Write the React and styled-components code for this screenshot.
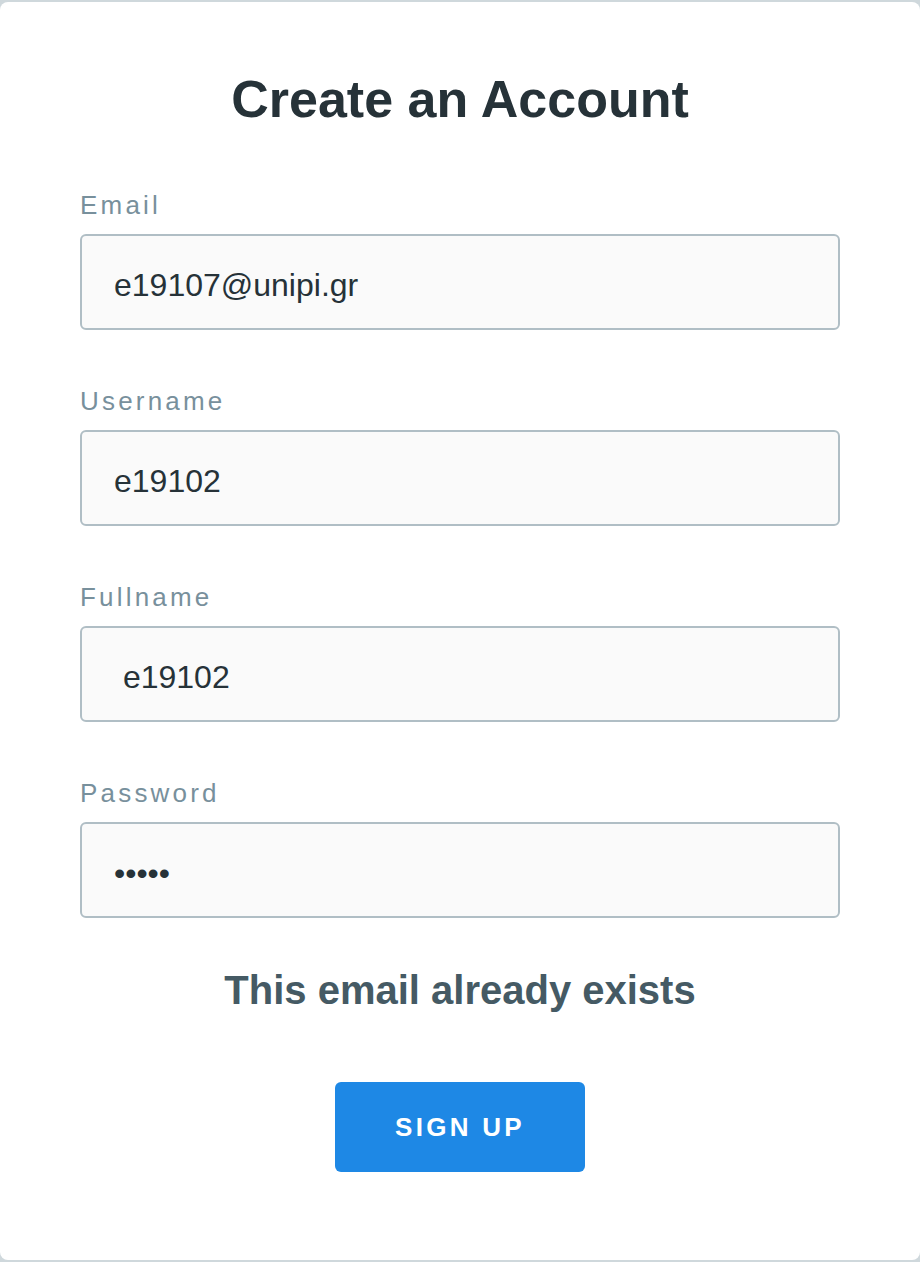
import React from 'react';
import styled, { createGlobalStyle } from 'styled-components';

const GlobalStyle = createGlobalStyle`
  html, body {
    margin: 0;
    padding: 0;
    background: #cfd8dc;
    font-family: "Liberation Sans", Arial, sans-serif;
  }
  * { box-sizing: border-box; }
`;

const Card = styled.div`
  margin: 2px 0;
  min-height: 1258px;
  background: #ffffff;
  border-radius: 8px;
  padding: 67px 80px 0;
  display: flex;
  flex-direction: column;
  align-items: center;
`;

const Title = styled.h1`
  margin: 0 0 61px;
  font-size: 52px;
  line-height: 60px;
  font-weight: bold;
  color: #263238;
  text-align: center;
`;

const Form = styled.form`
  width: 100%;
  display: flex;
  flex-direction: column;
`;

const Fields = styled.div`
  display: flex;
  flex-direction: column;
  gap: 56px;
`;

const Field = styled.div`
  display: flex;
  flex-direction: column;
  gap: 14px;
`;

const Label = styled.label`
  font-size: 26px;
  line-height: 30px;
  letter-spacing: 3.2px;
  color: #78909c;
`;

const Input = styled.input`
  width: 100%;
  height: 96px;
  padding: 6px 32px 0;
  border: 2px solid #b0bec5;
  border-radius: 6px;
  background: #fafafa;
  font-family: "Liberation Sans", Arial, sans-serif;
  font-size: 32px;
  color: #263238;
  outline: none;
`;

const ErrorText = styled.p`
  margin: 49px 0 0;
  font-size: 40px;
  line-height: 46px;
  font-weight: bold;
  color: #455a64;
  text-align: center;
`;

const Button = styled.button`
  align-self: center;
  margin-top: 69px;
  width: 250px;
  height: 90px;
  border: none;
  border-radius: 6px;
  background: #1e88e5;
  color: #ffffff;
  font-family: "Liberation Sans", Arial, sans-serif;
  font-size: 26px;
  font-weight: bold;
  letter-spacing: 3.3px;
  cursor: pointer;
`;

const fields = [
  { label: 'Email', type: 'text', value: 'e19107@unipi.gr' },
  { label: 'Username', type: 'text', value: 'e19102' },
  { label: 'Fullname', type: 'text', value: ' e19102' },
  { label: 'Password', type: 'password', value: '12345' },
];

const App = () => {
  return (
    <>
      <GlobalStyle />
      <Card>
        <Title>Create an Account</Title>
        <Form onSubmit={(e) => e.preventDefault()}>
          <Fields>
            {fields.map((f) => (
              <Field key={f.label}>
                <Label>{f.label}</Label>
                <Input type={f.type} defaultValue={f.value} />
              </Field>
            ))}
          </Fields>
          <ErrorText>This email already exists</ErrorText>
          <Button type="submit">SIGN UP</Button>
        </Form>
      </Card>
    </>
  );
};

export default App;
